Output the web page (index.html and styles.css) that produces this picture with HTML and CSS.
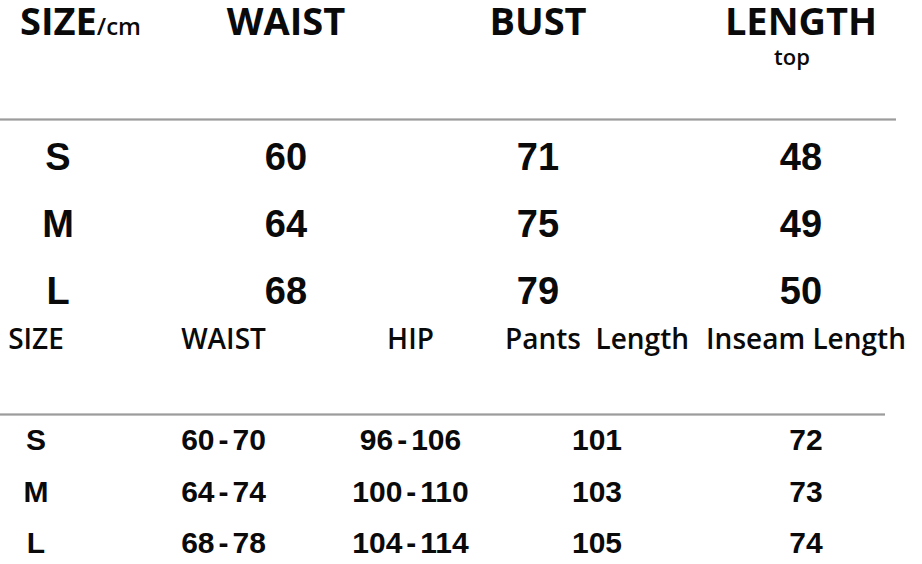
FILE: index.html
```html
<!DOCTYPE html>
<html lang="en">
<head>
<meta charset="utf-8">
<title>Size chart</title>
<link rel="stylesheet" href="styles.css">
</head>
<body>
<div class="chart">
  <div class="top-table">
    <div class="top-head first">SIZE<span class="unit">/cm</span></div>
    <div class="top-head">WAIST</div>
    <div class="top-head">BUST</div>
    <div class="top-head last"><span class="main">LENGTH</span><span class="sub">top</span></div>
  </div>
  <div class="rule rule-top"></div>
  <div class="top-table body">
    <div class="cell first">S</div><div class="cell">60</div><div class="cell">71</div><div class="cell last">48</div>
    <div class="cell first">M</div><div class="cell">64</div><div class="cell">75</div><div class="cell last">49</div>
    <div class="cell first">L</div><div class="cell">68</div><div class="cell">79</div><div class="cell last">50</div>
  </div>

  <div class="bot-table head">
    <div class="bhead first">SIZE</div>
    <div class="bhead">WAIST</div>
    <div class="bhead">HIP</div>
    <div class="bhead">Pants&nbsp; Length</div>
    <div class="bhead">Inseam Length</div>
  </div>
  <div class="rule rule-bot"></div>
  <div class="bot-table body">
    <div class="bcell first">S</div><div class="bcell">60<span class="dash">-</span>70</div><div class="bcell">96<span class="dash">-</span>106</div><div class="bcell">101</div><div class="bcell">72</div>
    <div class="bcell first">M</div><div class="bcell">64<span class="dash">-</span>74</div><div class="bcell">100<span class="dash">-</span>110</div><div class="bcell">103</div><div class="bcell">73</div>
    <div class="bcell first">L</div><div class="bcell">68<span class="dash">-</span>78</div><div class="bcell">104<span class="dash">-</span>114</div><div class="bcell">105</div><div class="bcell">74</div>
  </div>
</div>
</body>
</html>
```

FILE: styles.css
```css
html, body {
  margin: 0;
  padding: 0;
  background: #ffffff;
}

body {
  width: 922px;
  height: 564px;
  overflow: hidden;
  color: #0a0a0a;
}

.chart {
  display: flex;
  flex-direction: column;
}

/* ---------- top table ---------- */
.top-table {
  display: grid;
  grid-template-columns: 160px 252px 252px 1fr;
}

.top-head {
  font-family: "Open Sans", "Noto Sans", sans-serif;
  font-weight: 700;
  font-size: 38px;
  line-height: 40px;
  text-align: center;
  height: 62px;
  display: flex;
  flex-direction: column;
  align-items: center;
}

.top-head.first {
  display: block;
  text-align: left;
  padding-left: 20px;
}

.top-head.last {
  padding-left: 16px;
}

.main {
  line-height: 40px;
}

.unit {
  font-size: 24px;
  font-weight: 600;
}

.sub {
  font-size: 22px;
  font-weight: 600;
  line-height: 22px;
  margin-top: 5px;
  margin-right: 18px;
}

.rule {
  height: 3px;
  background: linear-gradient(#d4d4d4, #9c9c9c 50%, #d4d4d4);
}

.rule-top {
  width: 896px;
  margin-top: 56px;
}

.top-table.body {
  margin-top: 3px;
}

.cell {
  font-family: "Liberation Sans", Arial, sans-serif;
  font-weight: 700;
  font-size: 38px;
  line-height: 67px;
  text-align: center;
}

.cell.first {
  justify-self: start;
  width: 116px;
}

.cell.last {
  padding-left: 16px;
}

/* ---------- bottom table ---------- */
.bot-table {
  display: grid;
  grid-template-columns: 130px 187px 187px 186px 232px;
}

.bhead {
  font-family: "Open Sans", "Noto Sans", sans-serif;
  font-weight: 600;
  font-size: 28px;
  line-height: 26px;
  height: 26px;
  text-align: center;
  white-space: nowrap;
}

.bhead.first,
.bcell.first {
  justify-self: start;
  width: 72px;
}

.rule-bot {
  width: 885px;
  margin-top: 62px;
}

.bot-table.body {
  margin-top: -2px;
}

.bcell {
  font-family: "Liberation Sans", Arial, sans-serif;
  font-weight: 700;
  font-size: 30px;
  line-height: 51.5px;
  text-align: center;
}

.dash {
  margin: 0 4px;
}
```
